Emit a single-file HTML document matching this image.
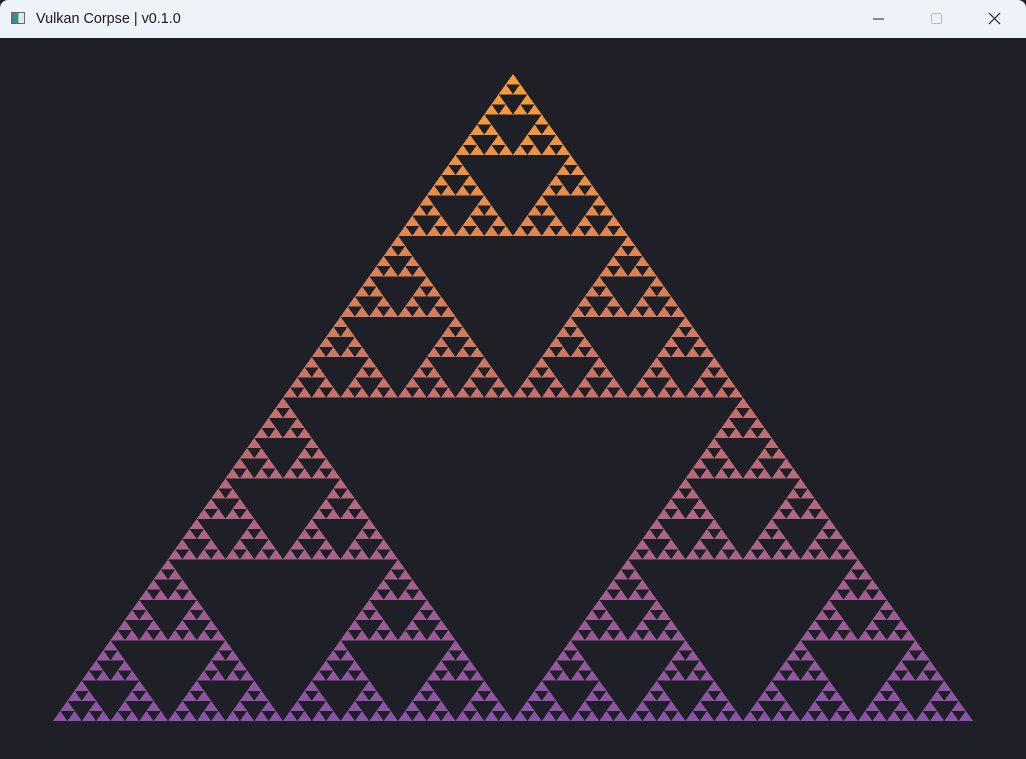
<!DOCTYPE html>
<html><head><meta charset="utf-8"><style>
html,body{margin:0;padding:0;width:1026px;height:759px;overflow:hidden;background:#1f1f27;}
.bar{position:absolute;left:0;top:0;width:1026px;height:38px;background:#eef2f9;border-radius:8px 8px 0 0;font-family:"Liberation Sans","DejaVu Sans",sans-serif;}
.title{position:absolute;left:36px;top:11px;font-size:14.4px;color:#1a1a1a;}
.ico{position:absolute;left:11px;top:12px;width:14px;height:12px;border:1px solid #6a6a6a;background:linear-gradient(90deg,#3a7fa0 0,#3a9a7a 55%,#dfe6ee 55%);box-sizing:border-box;}
svg.f{position:absolute;left:0;top:0;}
</style></head><body>
<div class="bar"><div class="ico"></div><div class="title">Vulkan Corpse | v0.1.0</div>
<svg style="position:absolute;left:0;top:0" width="1026" height="38">
<line x1="873" y1="19" x2="884" y2="19" stroke="#222" stroke-width="1"/>
<rect x="931.5" y="13.5" width="10" height="10" rx="1.5" fill="none" stroke="#bbb"/>
<path d="M989 13 L1000 24 M1000 13 L989 24" stroke="#222" stroke-width="1.2"/>
</svg></div>
<svg class="f" width="1026" height="759" shape-rendering="crispEdges">
<defs>
<polygon id="l0" points="0,0 -7.3,10.25 7.3,10.25" fill="#fff"/>
<g id="l1"><use href="#l0"/><use href="#l0" x="-7.1875" y="10.109"/><use href="#l0" x="7.1875" y="10.109"/></g>
<g id="l2"><use href="#l1"/><use href="#l1" x="-14.375" y="20.219"/><use href="#l1" x="14.375" y="20.219"/></g>
<g id="l3"><use href="#l2"/><use href="#l2" x="-28.75" y="40.4375"/><use href="#l2" x="28.75" y="40.4375"/></g>
<g id="l4"><use href="#l3"/><use href="#l3" x="-57.5" y="80.875"/><use href="#l3" x="57.5" y="80.875"/></g>
<g id="l5"><use href="#l4"/><use href="#l4" x="-115" y="161.75"/><use href="#l4" x="115" y="161.75"/></g>
<g id="l6"><use href="#l5"/><use href="#l5" x="-230" y="323.5"/><use href="#l5" x="230" y="323.5"/></g>
<mask id="m" maskUnits="userSpaceOnUse" x="0" y="0" width="1026" height="759"><use href="#l6" x="513" y="74"/></mask>
<linearGradient id="g" gradientUnits="userSpaceOnUse" x1="0" y1="74" x2="0" y2="721">
<stop offset="0" stop-color="#fb9d35"/><stop offset="0.5" stop-color="#c7716a"/><stop offset="1" stop-color="#8a52a8"/></linearGradient>
</defs>
<rect x="0" y="38" width="1026" height="721" fill="url(#g)" mask="url(#m)"/>
</svg>
</body></html>
